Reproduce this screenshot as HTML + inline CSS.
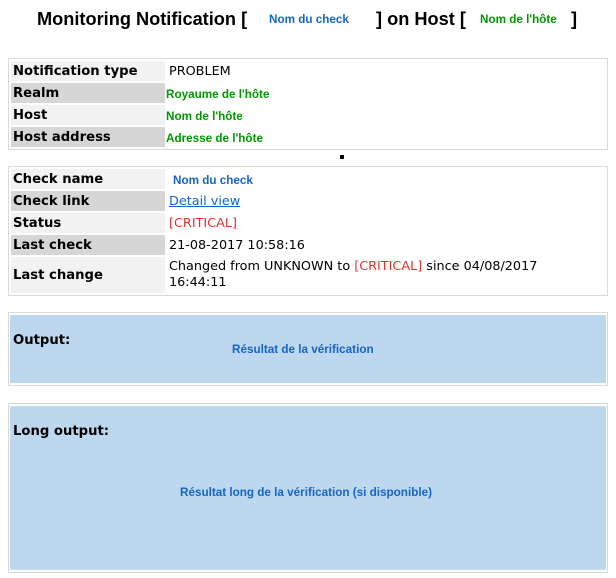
<!DOCTYPE html>
<html><head><meta charset="utf-8"><style>
*{margin:0;padding:0;box-sizing:border-box}
body{width:616px;height:578px;background:#fff;position:relative;overflow:hidden;font-family:"DejaVu Sans","Liberation Sans",sans-serif;color:#000}
.a{position:absolute;white-space:nowrap}
.box{position:absolute;left:8px;width:600px;border:1px solid #d9d9d9}
.lab{position:absolute;left:11px;width:154px;font-weight:bold;font-size:13.2px;padding-left:2px;display:flex;align-items:center}
.l1{background:#f2f2f2}.l2{background:#d6d6d6}
.val{position:absolute;left:169px;font-size:12.8px;display:flex;align-items:center;white-space:nowrap}
.g{font-family:"Liberation Sans",sans-serif;font-weight:bold;font-size:11.7px;color:#009900;left:166px}
.b{font-family:"Liberation Sans",sans-serif;font-weight:bold;font-size:11.7px;color:#1565c8}
.t{font-family:"Liberation Sans",sans-serif;font-weight:bold;font-size:18.2px}
.blue{position:absolute;left:10px;width:596px;background:#bdd7ee}
.red{color:#e8302a}
</style></head><body>
<div class="a t" style="left:37px;top:9px">Monitoring Notification [</div>
<div class="a b" style="left:269px;top:13px">Nom du check</div>
<div class="a t" style="left:376px;top:9px">] on Host [</div>
<div class="a g" style="left:480px;top:13px">Nom de l'hôte</div>
<div class="a t" style="left:571px;top:9px">]</div>

<div class="box" style="top:58px;height:92px"></div>
<div class="lab l1" style="top:61px;height:20px">Notification type</div>
<div class="lab l2" style="top:83px;height:20px">Realm</div>
<div class="lab l1" style="top:105px;height:20px">Host</div>
<div class="lab l2" style="top:127px;height:20px">Host address</div>
<div class="val" style="top:61px;height:20px;left:169px">PROBLEM</div>
<div class="val g" style="top:84px;height:20px">Royaume de l'hôte</div>
<div class="val g" style="top:106px;height:20px">Nom de l'hôte</div>
<div class="val g" style="top:128px;height:20px">Adresse de l'hôte</div>

<div class="a" style="left:340px;top:155px;width:4px;height:4px;background:#000"></div>

<div class="box" style="top:166px;height:130px"></div>
<div class="lab l1" style="top:169px;height:20px">Check name</div>
<div class="lab l2" style="top:191px;height:20px">Check link</div>
<div class="lab l1" style="top:213px;height:20px">Status</div>
<div class="lab l2" style="top:235px;height:20px">Last check</div>
<div class="lab l1" style="top:257px;height:36px">Last change</div>
<div class="val b" style="top:170px;height:20px;left:173px">Nom du check</div>
<div class="val" style="top:191px;height:20px;color:#1565c8;text-decoration:underline">Detail view</div>
<div class="val red" style="top:213px;height:20px">[CRITICAL]</div>
<div class="val" style="top:235px;height:20px">21-08-2017 10:58:16</div>
<div class="a" style="left:169px;top:259px;font-size:12.8px;line-height:16px">Changed from UNKNOWN to <span class="red">[CRITICAL]</span> since 04/08/2017<br>16:44:11</div>

<div class="box" style="top:312px;height:74px"></div>
<div class="blue" style="top:315px;height:68px"></div>
<div class="a" style="left:13px;top:333px;font-weight:bold;font-size:13.2px">Output:</div>
<div class="a b" style="left:232px;top:343px">Résultat de la vérification</div>

<div class="box" style="top:403px;height:170px"></div>
<div class="blue" style="top:406px;height:164px"></div>
<div class="a" style="left:13px;top:424px;font-weight:bold;font-size:13.2px">Long output:</div>
<div class="a b" style="left:180px;top:486px">Résultat long de la vérification (si disponible)</div>
</body></html>
